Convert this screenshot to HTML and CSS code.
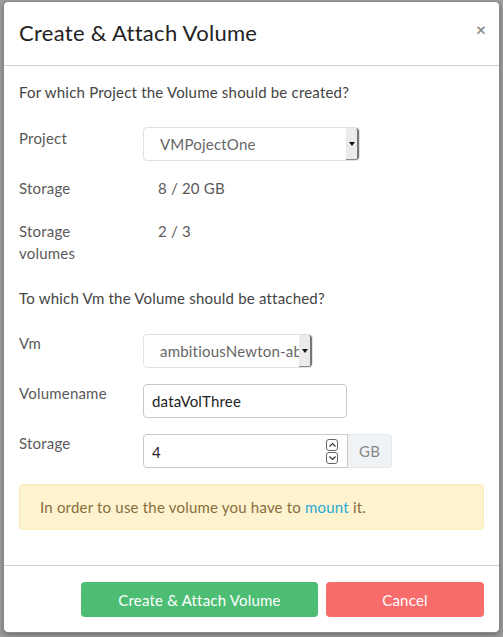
FILE: index.html
```html
<!DOCTYPE html>
<html>
<head>
<meta charset="utf-8">
<link rel="stylesheet" href="styles.css">
</head>
<body>
<div class="modal">
  <div class="modal-header">
    <h4 class="modal-title">Create &amp; Attach Volume</h4>
    <span class="close">&times;</span>
  </div>
  <div class="modal-body">
    <p class="lead-q first">For which Project the Volume should be created?</p>
    <div class="row r-project">
      <div class="label">Project</div>
      <div class="value">
        <div class="select w-project"><span class="sel-text">VMPojectOne</span><span class="sel-btn"><span class="caret"></span></span></div>
      </div>
    </div>
    <div class="row r-static">
      <div class="label">Storage</div>
      <div class="value static">8 / 20 GB</div>
    </div>
    <div class="row r-static2">
      <div class="label">Storage<br>volumes</div>
      <div class="value static">2 / 3</div>
    </div>
    <p class="lead-q second">To which Vm the Volume should be attached?</p>
    <div class="row r-ctrl">
      <div class="label">Vm</div>
      <div class="value">
        <div class="select w-vm"><span class="sel-text">ambitiousNewton-abe</span><span class="sel-btn"><span class="caret"></span></span></div>
      </div>
    </div>
    <div class="row r-ctrl">
      <div class="label">Volumename</div>
      <div class="value">
        <div class="input w-name">dataVolThree</div>
      </div>
    </div>
    <div class="row r-ctrl">
      <div class="label">Storage</div>
      <div class="value">
        <div class="input-group">
          <div class="input num">4<span class="spin"><span class="spin-up"><svg width="9" height="6" viewBox="0 0 9 6"><path d="M1.5 4.5 L4.5 1.5 L7.5 4.5" fill="none" stroke="#333" stroke-width="1.2"/></svg></span><span class="spin-down"><svg width="9" height="6" viewBox="0 0 9 6"><path d="M1.5 1.5 L4.5 4.5 L7.5 1.5" fill="none" stroke="#333" stroke-width="1.2"/></svg></span></span></div>
          <div class="addon">GB</div>
        </div>
      </div>
    </div>
    <div class="alert">In order to use the volume you have to <a class="link">mount</a> it.</div>
  </div>
  <div class="modal-footer">
    <button class="btn btn-green">Create &amp; Attach Volume</button>
    <button class="btn btn-red">Cancel</button>
  </div>
</div>
</body>
</html>
```
FILE: styles.css
```css
html, body {
  margin: 0;
  padding: 0;
  background: #9c9c9c;
  height: 637px;
  overflow: hidden;
}
body {
  font-family: Lato, "Open Sans", sans-serif;
  font-size: 15px;
  letter-spacing: 0.2px;
  color: #333;
}
.modal {
  margin: 1px 3px 0 3px;
  width: 497px;
  box-sizing: border-box;
  background: #fff;
  border: 1px solid #8a8a8a;
  border-radius: 5px;
  box-shadow: 0 2px 4px rgba(0,0,0,0.3);
}
.modal-header {
  height: 64px;
  box-sizing: border-box;
  padding: 0 15px;
  display: flex;
  align-items: center;
  justify-content: space-between;
  border-bottom: 1px solid #cfcfcf;
}
.modal-title {
  margin: 0;
  font-size: 22px;
  letter-spacing: 0.3px;
  font-weight: 400;
  color: #222;
  position: relative;
  top: -1px;
}
.close {
  font-size: 17px;
  color: #8a8a8a;
  font-weight: 700;
  margin-right: -2px;
  margin-top: -8px;
}
.modal-body {
  padding: 15px 15px 15px 15px;
}
.lead-q {
  margin: 0;
  line-height: 22px;
  color: #444;
}
.lead-q.first { margin-bottom: 24px; }
.lead-q.second { margin-bottom: 25px; }
.row {
  display: flex;
}
.label {
  width: 124px;
  flex: none;
  line-height: 22px;
  color: #5a5a5a;
}
.r-project { margin-bottom: 16px; }
.r-static { margin-bottom: 21px; }
.r-static2 { margin-bottom: 23px; }
.r-ctrl { margin-bottom: 16px; }
.r-ctrl .label { margin-top: -2px; }
.value.static {
  padding-left: 15px;
  line-height: 22px;
  color: #5a5a5a;
}
.select {
  height: 34px;
  box-sizing: border-box;
  border: 1px solid #e2e2e2;
  border-radius: 4px;
  display: flex;
  align-items: stretch;
  overflow: hidden;
  background: #fff;
}
.w-project { width: 217px; }
.w-vm { width: 170px; }
.sel-text {
  flex: 1;
  padding-left: 16px;
  line-height: 32px;
  color: #666;
  white-space: nowrap;
  overflow: hidden;
}
.sel-btn {
  width: 13px;
  flex: none;
  background: #ebebeb;
  border-right: 2px solid #777;
  border-bottom: 1px solid #888;
  border-radius: 0 3px 3px 0;
  display: flex;
  align-items: center;
  justify-content: center;
  box-sizing: border-box;
}
.caret {
  width: 0;
  height: 0;
  border-left: 3px solid transparent;
  border-right: 3px solid transparent;
  border-top: 4px solid #111;
  margin-left: 1px;
}
.input {
  height: 34px;
  box-sizing: border-box;
  border: 1px solid #c8c8c8;
  border-radius: 4px;
  padding-left: 8px;
  line-height: 32px;
  color: #222;
}
.w-name { width: 204px; }
.input-group {
  display: flex;
  width: 249px;
}
.input.num {
  width: 205px;
  border-radius: 4px 0 0 4px;
  display: flex;
  align-items: center;
  justify-content: space-between;
  padding-right: 9px;
  line-height: 34px;
  padding-top: 2px;
}
.spin {
  display: flex;
  flex-direction: column;
  gap: 1px;
  margin-top: -2px;
}
.spin-up, .spin-down {
  width: 12px;
  height: 12px;
  box-sizing: border-box;
  border: 1px solid #666;
  border-radius: 3px;
  display: flex;
  align-items: center;
  justify-content: center;
  background: #fff;
}
.addon {
  width: 44px;
  height: 34px;
  box-sizing: border-box;
  background: #f0f3f5;
  border: 1px solid #e6e9eb;
  border-left: none;
  border-radius: 0 4px 4px 0;
  line-height: 32px;
  text-align: center;
  color: #888;
}
.alert {
  margin-top: 1px;
  margin-bottom: 20px;
  height: 46px;
  box-sizing: border-box;
  background: #fdf3cf;
  border: 1px solid #faeaba;
  border-radius: 4px;
  padding: 0 20px;
  line-height: 44px;
  color: #8a6d3b;
}
.link {
  color: #2aa9d8;
}
.modal-footer {
  border-top: 1px solid #cfcfcf;
  padding: 16px 15px 15px 15px;
  display: flex;
  justify-content: flex-end;
  gap: 8px;
}
.btn {
  height: 35px;
  border: none;
  border-radius: 4px;
  color: #fff;
  font-family: inherit;
  font-size: 15px;
  letter-spacing: 0.2px;
  padding: 0;
}
.btn-green {
  width: 237px;
  background: #4dbd74;
}
.btn-red {
  width: 158px;
  background: #f86c6b;
}
```
